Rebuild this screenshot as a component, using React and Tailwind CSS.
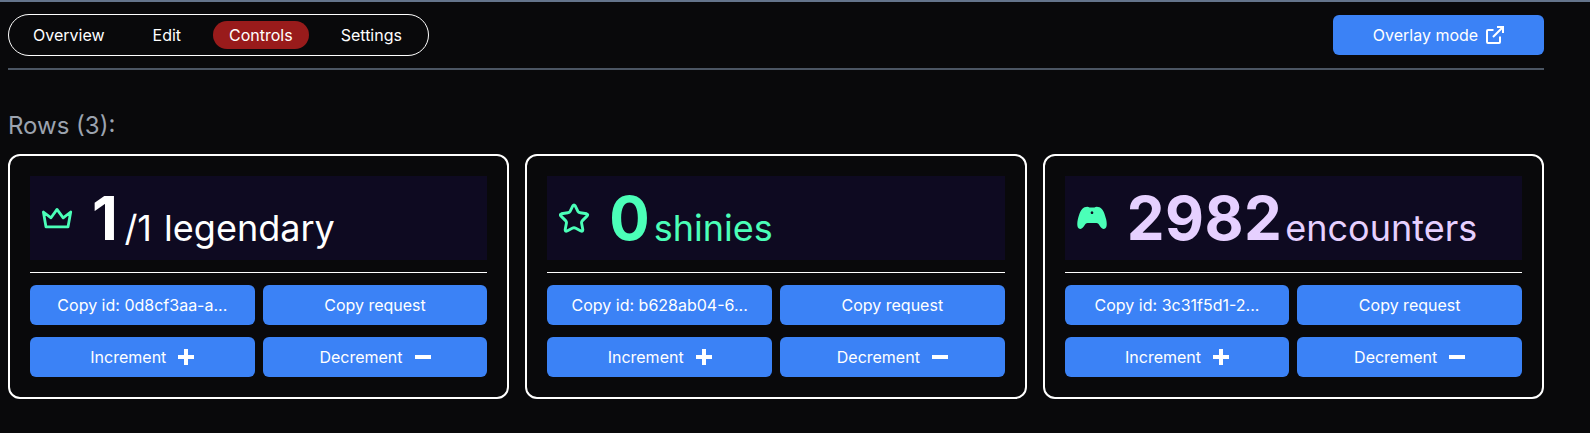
const tabs = ["Overview", "Edit", "Controls", "Settings"];

function CrownIcon() {
  return (
    <svg viewBox="0 0 32 32" className="size-8 shrink-0" fill="none" stroke="#4bffb8" strokeWidth="2.8" strokeLinejoin="round">
      <path d="M1.4 10L4 24.9H26L28.7 10L21.2 15.8L15 7.4L9 15.8Z" />
    </svg>
  );
}

function StarIcon() {
  return (
    <svg viewBox="0 0 32 32" className="size-8 shrink-0" fill="none" stroke="#4bffb8" strokeWidth="2.9" strokeLinejoin="round">
      <path d="M13.8 3.8Q15 2 16.2 3.8L18.8 9.2Q19.6 10.6 21.2 10.8L27.6 11.8Q29.4 12.4 28.2 13.9L23.4 18.6Q22.3 19.7 22.6 21.3L23.8 27.6Q23.9 29.8 21.9 29L16.8 26.2Q15 25.3 13.2 26.2L8.1 29Q6.1 29.8 6.2 27.6L7.4 21.3Q7.7 19.7 6.6 18.6L1.8 13.9Q.6 12.4 2.4 11.8L8.8 10.8Q10.4 10.6 11.2 9.2Z" />
    </svg>
  );
}

function GamepadIcon() {
  return (
    <svg viewBox="0 0 32 32" className="size-8 shrink-0" fill="#4bffb8" fillRule="evenodd">
      <path d="M7.5 5.2q3.500-1.200 5 .3h5q1.500-1.500 5-.3c3.500 1.200 5.300 7 6.700 12.200c.9 4.500 1 9.400-2.500 9.600c-2.600 0-3.600-3.200-5.700-5.400q-.6-.6-1.500-.6h-9q-.9 0-1.500.6c-2.100 2.200-3.100 5.400-5.700 5.400c-3.500-.2-3.400-5.100-2.500-9.600c1.400-5.200 3.200-11 6.700-12.200zM15 9.300a1.300 1.400 0 1 0 .01 0z" />
    </svg>
  );
}

function ExternalIcon() {
  return (
    <svg viewBox="0 0 18 18" className="size-[18px]" fill="none" stroke="currentColor" strokeWidth="2">
      <path d="M7.500 4H2Q1 4 1 5V16Q1 17 2 17H13Q14 17 14 16V10.500M11 1H17V7M16.800 1.200L7 11" />
    </svg>
  );
}

function PlusIcon() {
  return (
    <svg viewBox="0 0 16 16" className="size-4" fill="currentColor">
      <path d="M6 0h4v6h6v4h-6v6H6v-6H0V6h6z" />
    </svg>
  );
}

function MinusIcon() {
  return (
    <svg viewBox="0 0 16 16" className="size-4" fill="currentColor">
      <path d="M0 6h16v4H0z" />
    </svg>
  );
}

const rows = [
  { id: "0d8cf3aa-a...", count: "1", label: "/1 legendary", color: "text-white", gap: "gap-1.5", Icon: CrownIcon },
  { id: "b628ab04-6...", count: "0", label: "shinies", color: "text-[#4bffb8]", gap: "gap-[3.5px]", Icon: StarIcon },
  { id: "3c31f5d1-2...", count: "2982", label: "encounters", color: "text-[#e6d0ff]", gap: "gap-[3px]", Icon: GamepadIcon },
];

function Button({ children, className = "" }) {
  return (
    <button className={`flex h-10 items-center justify-center rounded-md bg-[#3b82f6] text-base text-white ${className}`}>
      {children}
    </button>
  );
}

function RowCard({ row }) {
  const { Icon } = row;
  return (
    <section className="rounded-xl border-2 border-white p-5">
      <div className={`flex h-[84px] items-center bg-[#0e0a21] pl-3 ${row.color}`}>
        <Icon />
        <div className={`ml-[18px] flex items-baseline ${row.gap}`}>
          <span className="text-[60px] leading-none font-bold tracking-[0.5px]">{row.count}</span>
          <span className="translate-y-px text-4xl [word-spacing:2px]">{row.label}</span>
        </div>
      </div>
      <hr className="my-3 border-white" />
      <div className="grid grid-cols-2 gap-x-2 gap-y-3">
        <Button>Copy id: {row.id}</Button>
        <Button>Copy request</Button>
        <Button className="gap-3">Increment <PlusIcon /></Button>
        <Button className="gap-3">Decrement <MinusIcon /></Button>
      </div>
    </section>
  );
}

export default function App() {
  return (
    <div className="h-[433px] overflow-hidden border-t-2 border-[#64748b] bg-[#09090b] pl-2 font-['Inter',sans-serif] text-white">
      <main className="w-[1536px]">
        <header className="flex items-center justify-between border-b-2 border-[#4b5563] py-3">
          <nav className="flex w-[421px] gap-4 rounded-full border border-white px-2 py-1.5">
            {tabs.map((tab) => (
              <a key={tab} className={`rounded-full px-4 py-0.5 ${tab === "Controls" ? "bg-[#991b1b]" : ""}`}>
                {tab}
              </a>
            ))}
          </nav>
          <Button className="w-[211px] gap-2">Overlay mode <ExternalIcon /></Button>
        </header>
        <h2 className="mt-10 mb-3 text-2xl text-[#9ca3af]">Rows (3):</h2>
        <div className="grid grid-cols-3 gap-4">
          {rows.map((row) => (
            <RowCard key={row.id} row={row} />
          ))}
        </div>
      </main>
    </div>
  );
}
